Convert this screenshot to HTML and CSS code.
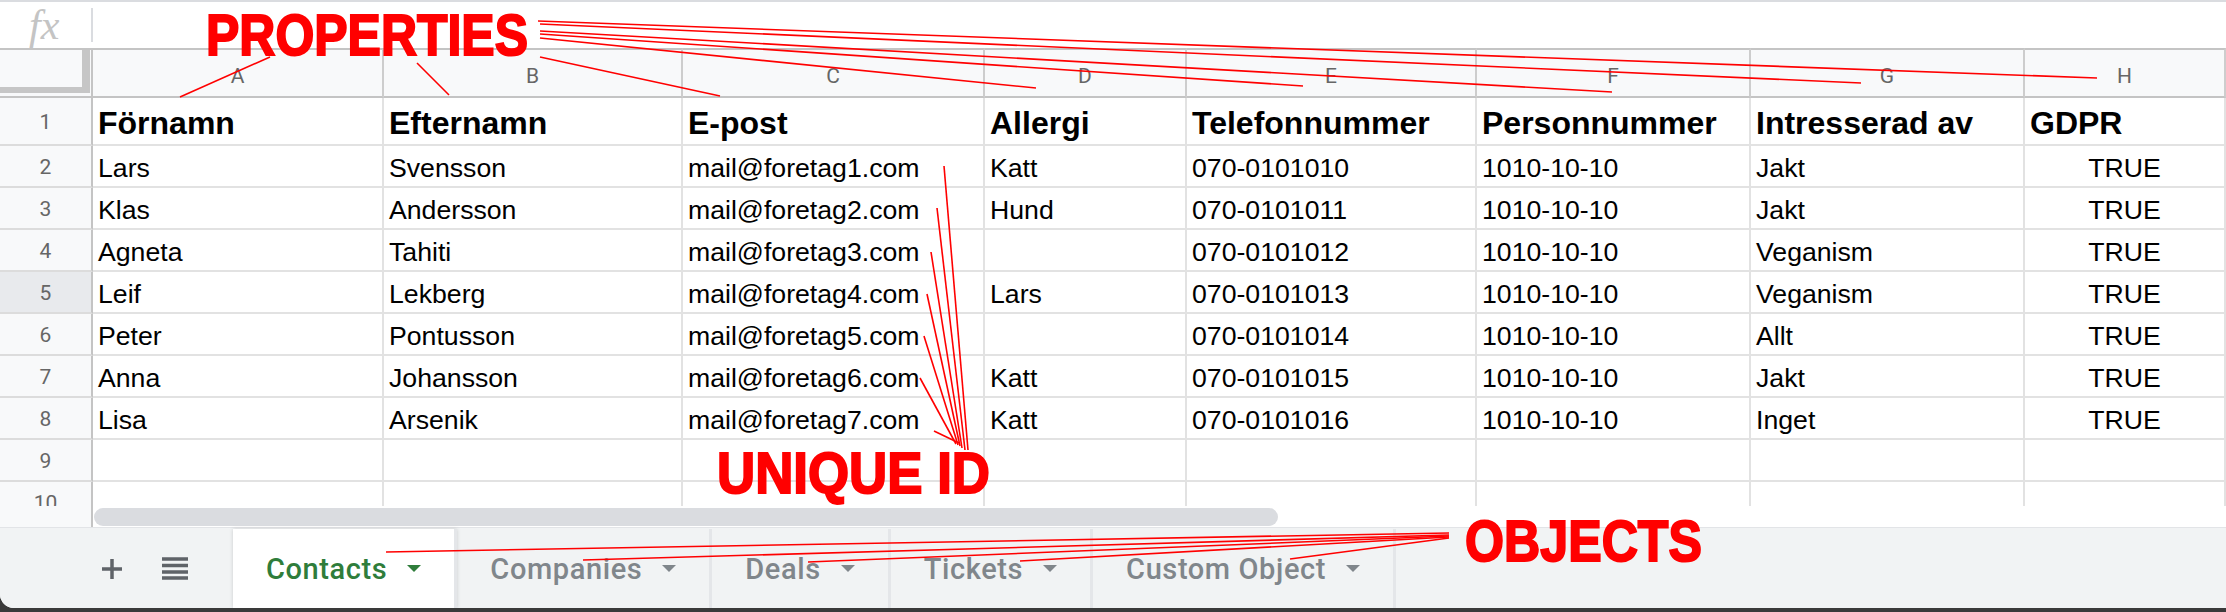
FILE: index.html
```html
<!DOCTYPE html>
<html lang="sv">

<head>
  <meta charset="UTF-8">
  <title>Contacts - Sheets</title>
  <link rel="stylesheet" href="styles.css">
</head>

<body>
  <div class="window">
    <div class="formula-bar">
      <span class="fx">fx</span>
      <span class="fx-sep"></span>
    </div>

    <div class="sheet">
      <div class="corner"><div class="corner-bar"></div></div>
      <div class="colhead">A</div>
      <div class="colhead">B</div>
      <div class="colhead">C</div>
      <div class="colhead">D</div>
      <div class="colhead">E</div>
      <div class="colhead">F</div>
      <div class="colhead">G</div>
      <div class="colhead">H</div>

      <div class="rh">1</div>
      <div class="cell head">Förnamn</div>
      <div class="cell head">Efternamn</div>
      <div class="cell head">E-post</div>
      <div class="cell head">Allergi</div>
      <div class="cell head">Telefonnummer</div>
      <div class="cell head">Personnummer</div>
      <div class="cell head">Intresserad av</div>
      <div class="cell head">GDPR</div>

      <div class="rh">2</div>
      <div class="cell">Lars</div>
      <div class="cell">Svensson</div>
      <div class="cell">mail@foretag1.com</div>
      <div class="cell">Katt</div>
      <div class="cell">070-0101010</div>
      <div class="cell">1010-10-10</div>
      <div class="cell">Jakt</div>
      <div class="cell bool">TRUE</div>

      <div class="rh">3</div>
      <div class="cell">Klas</div>
      <div class="cell">Andersson</div>
      <div class="cell">mail@foretag2.com</div>
      <div class="cell">Hund</div>
      <div class="cell">070-0101011</div>
      <div class="cell">1010-10-10</div>
      <div class="cell">Jakt</div>
      <div class="cell bool">TRUE</div>

      <div class="rh">4</div>
      <div class="cell">Agneta</div>
      <div class="cell">Tahiti</div>
      <div class="cell">mail@foretag3.com</div>
      <div class="cell"></div>
      <div class="cell">070-0101012</div>
      <div class="cell">1010-10-10</div>
      <div class="cell">Veganism</div>
      <div class="cell bool">TRUE</div>

      <div class="rh sel">5</div>
      <div class="cell">Leif</div>
      <div class="cell">Lekberg</div>
      <div class="cell">mail@foretag4.com</div>
      <div class="cell">Lars</div>
      <div class="cell">070-0101013</div>
      <div class="cell">1010-10-10</div>
      <div class="cell">Veganism</div>
      <div class="cell bool">TRUE</div>

      <div class="rh">6</div>
      <div class="cell">Peter</div>
      <div class="cell">Pontusson</div>
      <div class="cell">mail@foretag5.com</div>
      <div class="cell"></div>
      <div class="cell">070-0101014</div>
      <div class="cell">1010-10-10</div>
      <div class="cell">Allt</div>
      <div class="cell bool">TRUE</div>

      <div class="rh">7</div>
      <div class="cell">Anna</div>
      <div class="cell">Johansson</div>
      <div class="cell">mail@foretag6.com</div>
      <div class="cell">Katt</div>
      <div class="cell">070-0101015</div>
      <div class="cell">1010-10-10</div>
      <div class="cell">Jakt</div>
      <div class="cell bool">TRUE</div>

      <div class="rh">8</div>
      <div class="cell">Lisa</div>
      <div class="cell">Arsenik</div>
      <div class="cell">mail@foretag7.com</div>
      <div class="cell">Katt</div>
      <div class="cell">070-0101016</div>
      <div class="cell">1010-10-10</div>
      <div class="cell">Inget</div>
      <div class="cell bool">TRUE</div>

      <div class="rh">9</div>
      <div class="cell"></div>
      <div class="cell"></div>
      <div class="cell"></div>
      <div class="cell"></div>
      <div class="cell"></div>
      <div class="cell"></div>
      <div class="cell"></div>
      <div class="cell"></div>

      <div class="rh">10</div>
      <div class="cell"></div>
      <div class="cell"></div>
      <div class="cell"></div>
      <div class="cell"></div>
      <div class="cell"></div>
      <div class="cell"></div>
      <div class="cell"></div>
      <div class="cell"></div>
    </div>

    <div class="hscroll">
      <div class="hscroll-corner"></div>
      <div class="hscroll-thumb"></div>
    </div>

    <div class="tabbar">
      <div class="tab-tools">
        <svg class="tool-icon" width="22" height="22" viewBox="0 0 22 22">
          <path d="M11 1v20M1 11h20" />
        </svg>
        <svg class="tool-icon" width="26" height="23" viewBox="0 0 26 23">
          <path d="M0 2h26M0 8.5h26M0 15h26M0 21h26" />
        </svg>
      </div>
      <div class="tab active">Contacts <span class="caret"></span></div>
      <div class="tab">Companies <span class="caret"></span></div>
      <div class="tab">Deals <span class="caret"></span></div>
      <div class="tab">Tickets <span class="caret"></span></div>
      <div class="tab">Custom Object <span class="caret"></span></div>
    </div>
  </div>

  <!-- annotations drawn over the screenshot -->
  <svg class="notes" width="2226" height="612" viewBox="0 0 2226 612">
    <line x1="270" y1="57" x2="180" y2="97" />
    <line x1="417" y1="63" x2="449" y2="95" />
    <line x1="540" y1="57" x2="720" y2="96" />
    <line x1="540" y1="38" x2="1036" y2="88" />
    <line x1="540" y1="34" x2="1303" y2="86" />
    <line x1="540" y1="31" x2="1612" y2="92" />
    <line x1="540" y1="24" x2="1861" y2="83" />
    <line x1="538" y1="21" x2="2097" y2="78" />

    <line x1="944" y1="166" x2="968" y2="450" />
    <line x1="937" y1="208" x2="965" y2="450" />
    <line x1="931" y1="252" x2="962" y2="448" />
    <line x1="927" y1="294" x2="960" y2="446" />
    <line x1="924" y1="336" x2="958" y2="445" />
    <line x1="920" y1="378" x2="956" y2="444" />
    <line x1="934" y1="431" x2="959" y2="443" />

    <line x1="386" y1="552" x2="1449" y2="533" />
    <line x1="583" y1="560" x2="1449" y2="535" />
    <line x1="808" y1="562" x2="1449" y2="536" />
    <line x1="1020" y1="561" x2="1449" y2="537" />
    <line x1="1290" y1="559" x2="1449" y2="538" />

    <text x="206" y="55" font-size="57" textLength="322" lengthAdjust="spacingAndGlyphs">PROPERTIES</text>
    <text x="717" y="493" font-size="57" textLength="273" lengthAdjust="spacingAndGlyphs">UNIQUE ID</text>
    <text x="1465" y="561" font-size="57" textLength="237" lengthAdjust="spacingAndGlyphs">OBJECTS</text>
  </svg>
</body>

</html>
```

FILE: styles.css
```css
body {
  margin: 0;
  width: 2226px;
  height: 612px;
  overflow: hidden;
  position: relative;
  background-color: #3a3a3a;
  font-family: "Liberation Sans", Arial, sans-serif;
}

.window {
  width: 2226px;
  height: 608px;
  background-color: #fff;
  border-bottom-left-radius: 14px;
  overflow: hidden;
  display: flex;
  flex-direction: column;
}

/* formula bar */
.formula-bar {
  height: 48px;
  box-sizing: border-box;
  border-top: 2px solid #dadce0;
  display: flex;
  align-items: center;
}

.fx {
  width: 91px;
  box-sizing: border-box;
  padding-left: 29px;
  font: italic 42px "Liberation Serif", serif;
  line-height: 1;
  color: #c4c4c4;
}

.fx-sep {
  width: 2px;
  height: 34px;
  background-color: #dadce0;
}

/* grid */
.sheet {
  height: 458px;
  overflow: hidden;
  display: grid;
  grid-template-columns: 93px 291px 299px 302px 202px 290px 274px 274px 201px;
  grid-template-rows: 50px 48px repeat(9, 42px);
}

.sheet > div {
  box-sizing: border-box;
}

.corner {
  background-color: #f8f9fa;
  border-top: 2px solid #c4c4c4;
  border-bottom: 2px solid #c4c4c4;
  border-right: 2px solid #c4c4c4;
  padding: 0 1px 3px 0;
}

.corner-bar {
  height: 100%;
  box-sizing: border-box;
  border-right: 8px solid #c6c6c6;
  border-bottom: 6px solid #c6c6c6;
}

.colhead {
  background-color: #f8f9fa;
  border-top: 2px solid #c4c4c4;
  border-bottom: 2px solid #c4c4c4;
  border-right: 2px solid #cdcdcd;
  display: flex;
  align-items: center;
  justify-content: center;
  padding-top: 5px;
  font: 21px Roboto, sans-serif;
  color: #666;
}

.rh {
  background-color: #f8f9fa;
  border-right: 2px solid #c4c4c4;
  border-bottom: 2px solid #dcdcdc;
  display: flex;
  align-items: center;
  justify-content: center;
  padding-top: 1px;
  font: 21px Roboto, sans-serif;
  color: #666;
}

.rh.sel {
  background-color: #e8eaed;
}

.cell {
  border-right: 2px solid #e2e2e2;
  border-bottom: 2px solid #e2e2e2;
  display: flex;
  align-items: flex-end;
  padding: 0 5px 2px;
  font-size: 26.67px;
  color: #000;
  white-space: nowrap;
  overflow: hidden;
}

.cell.head {
  font-weight: bold;
  font-size: 32px;
}

.cell.bool {
  justify-content: center;
}

/* horizontal scrollbar */
.hscroll {
  height: 21px;
  display: flex;
  background-color: #fff;
}

.hscroll-corner {
  width: 93px;
  box-sizing: border-box;
  background-color: #f8f9fa;
  border-right: 2px solid #c4c4c4;
}

.hscroll-thumb {
  margin: 2px 0 1px 1px;
  width: 1184px;
  height: 18px;
  border-radius: 9px;
  background-color: #dadce0;
}

/* sheet tabs */
.tabbar {
  flex: 1;
  display: flex;
  background-color: #f1f3f4;
  border-top: 1px solid #e2e4e7;
  padding-top: 1px;
}

.tab-tools {
  width: 233px;
  box-sizing: border-box;
  padding-left: 101px;
  display: flex;
  align-items: center;
  gap: 39px;
}

.tool-icon path {
  stroke: #5f6368;
  stroke-width: 3.5;
  fill: none;
}

.tab {
  display: flex;
  align-items: center;
  gap: 20px;
  padding: 0 33px;
  font: 500 29px Roboto, sans-serif;
  letter-spacing: 0.6px;
  color: #80868b;
  border-right: 3px solid #e4e6e9;
}

.tab.active {
  background-color: #fff;
  color: #2f7d3b;
  box-shadow: 0 0 4px rgba(0, 0, 0, 0.16);
}

.caret {
  width: 0;
  height: 0;
  border-left: 7.5px solid transparent;
  border-right: 7.5px solid transparent;
  border-top: 7.5px solid currentColor;
}

/* red annotations */
.notes {
  position: absolute;
  left: 0;
  top: 0;
  pointer-events: none;
}

.notes line {
  stroke: #ff0000;
  stroke-width: 1.6;
}

.notes text {
  fill: #ff0000;
  stroke: #ff0000;
  stroke-width: 2;
  font-family: "Liberation Sans", Arial, sans-serif;
  font-weight: bold;
}
```
